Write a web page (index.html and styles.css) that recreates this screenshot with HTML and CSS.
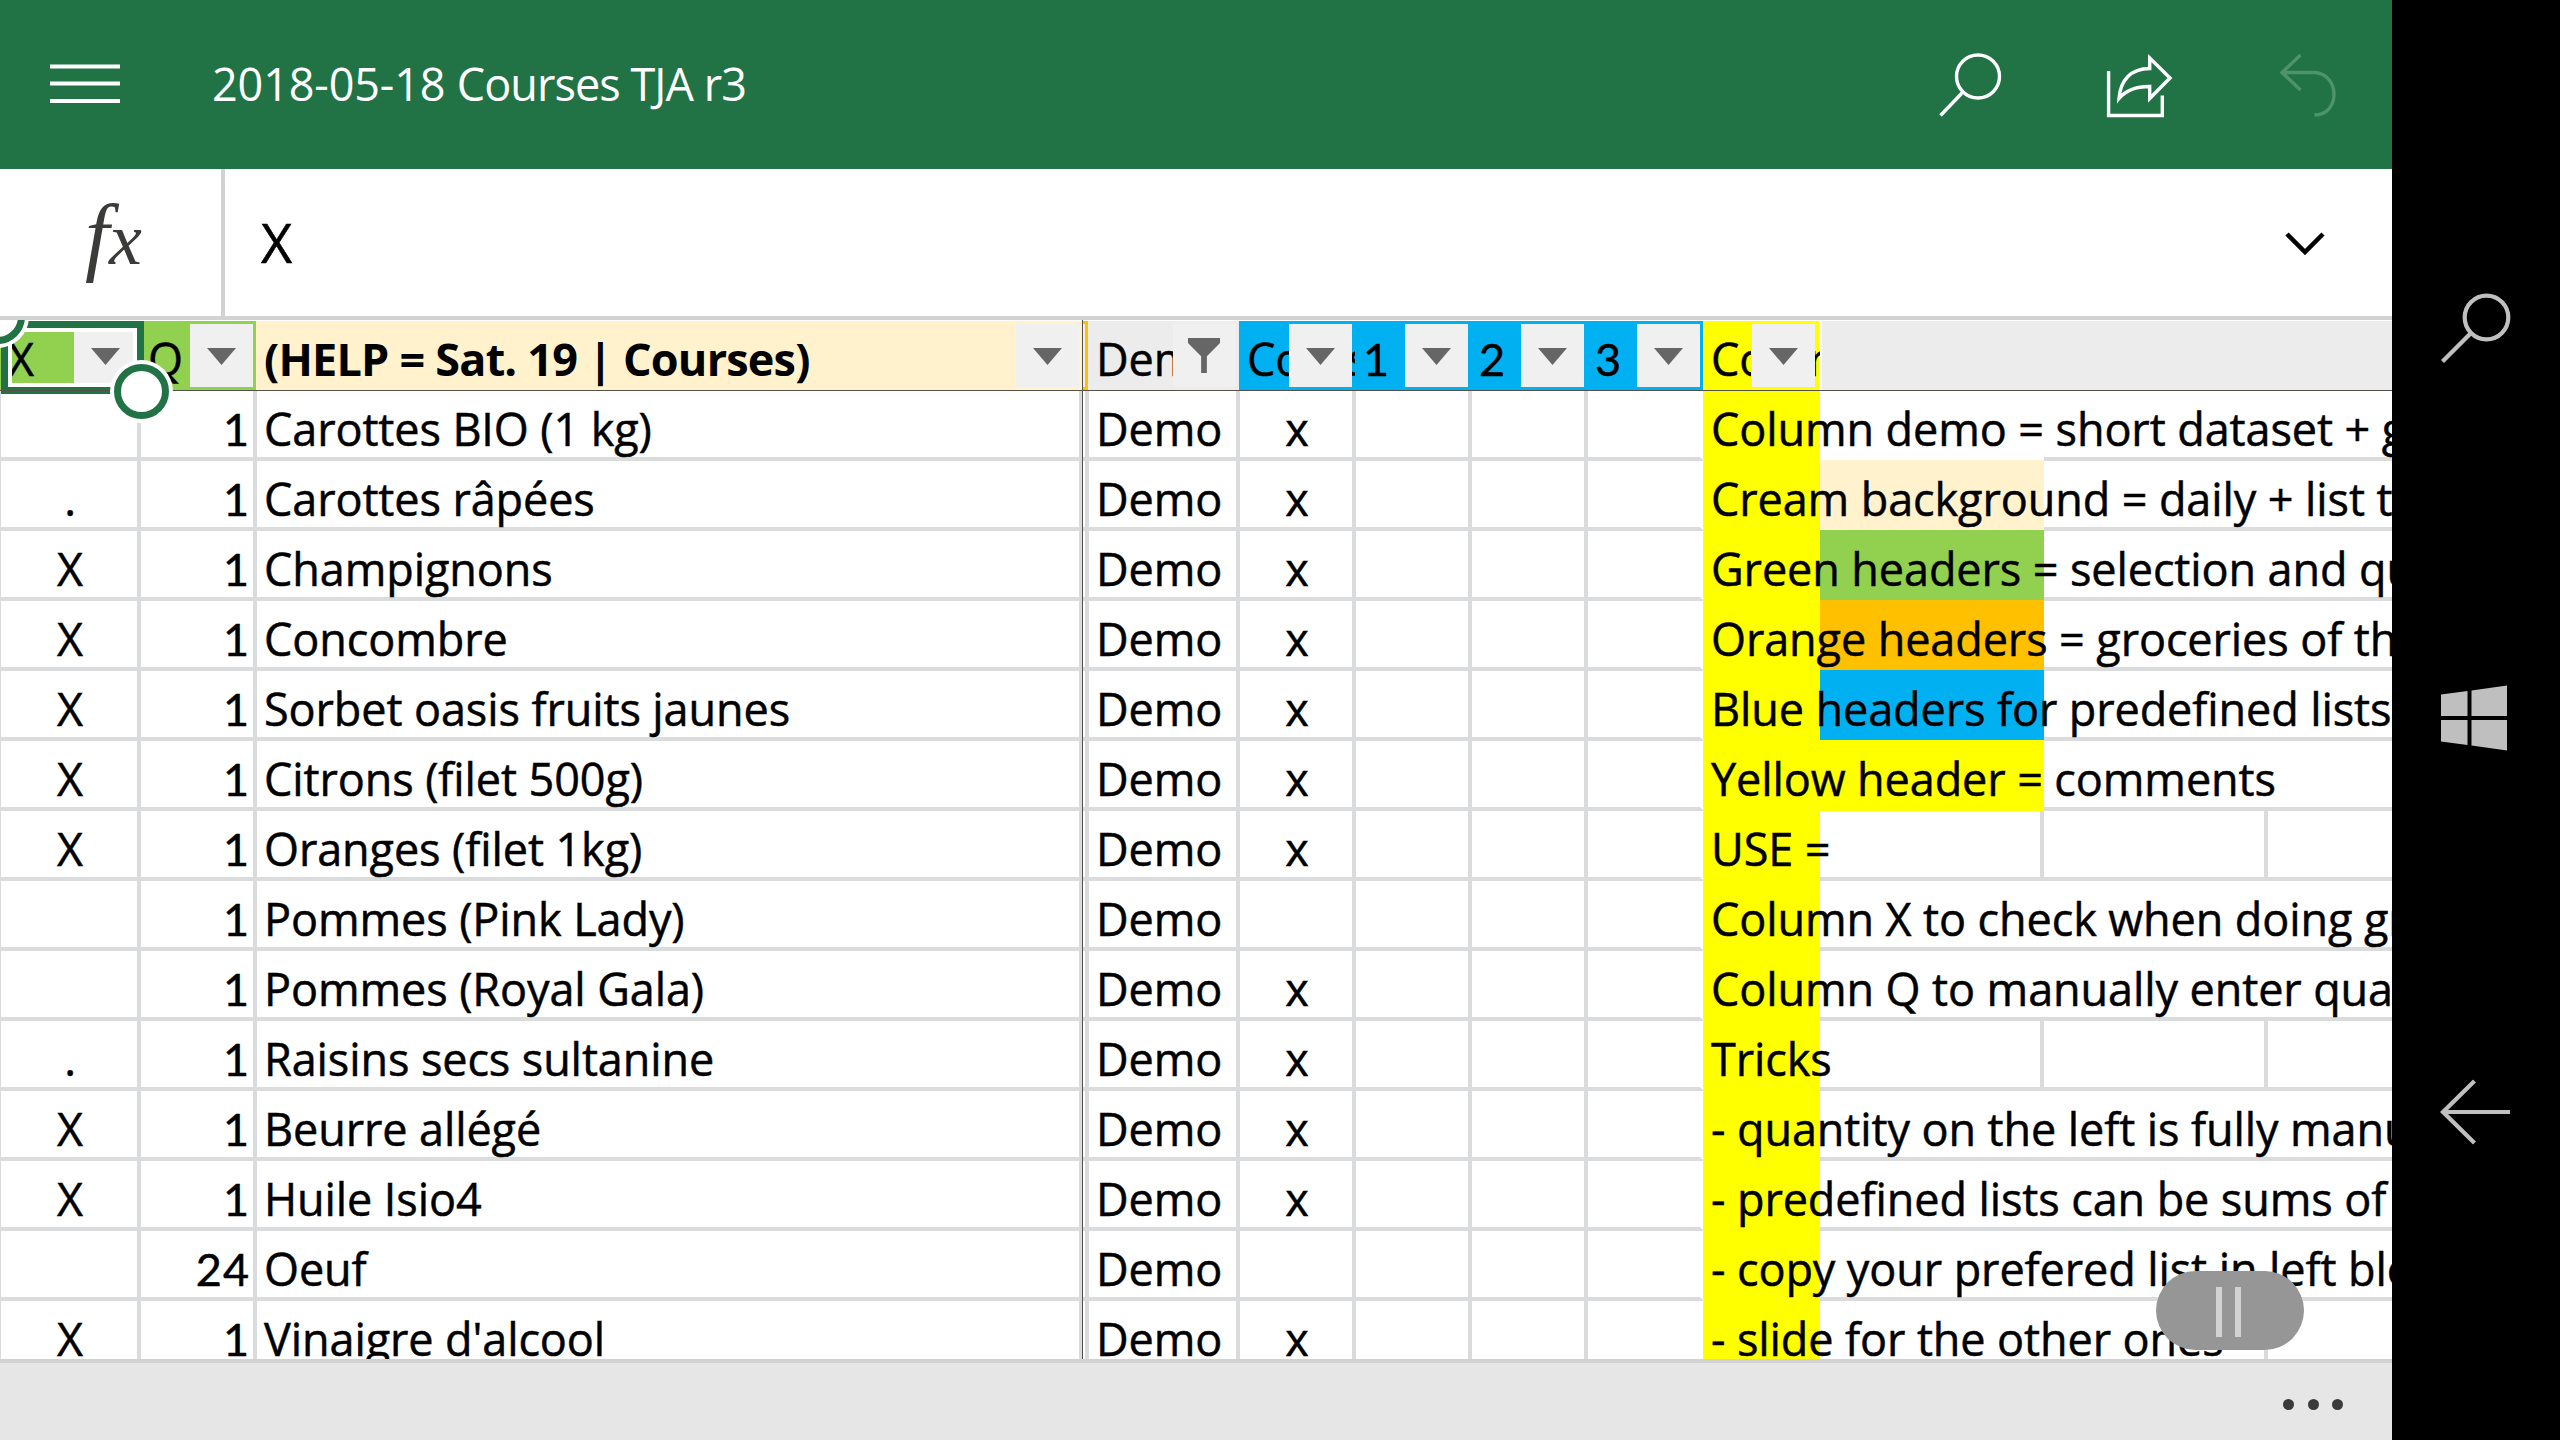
FILE: index.html
```html
<!DOCTYPE html>
<html lang="en">
<head>
<meta charset="utf-8">
<title>2018-05-18 Courses TJA r3</title>
<link rel="stylesheet" href="styles.css">
</head>
<body>
<div class="screen">
  <main class="app">
    <header class="titlebar">
      <svg class="menu" viewBox="0 0 70 40"><path d="M0 2.5h70M0 19.5h70M0 37h70"/></svg>
      <h1 class="title"><span class="date">2018-05-18 </span>Courses TJA r3</h1>
      <svg class="tools" viewBox="0 0 400 64">
        <circle cx="38" cy="23.500" r="21.5"/>
        <path d="M22.500 39.500 .5 62.500"/>
        <path d="M168.600 18V62.500H222.300V42.500M209.700 5 230 25 209.700 45.500V33.500C197 33.500 186 37 179 45.500C180.500 27 191 15.500 209.700 15.500Z"/>
        <path class="dim" d="M360.500 2 342 19.500 360.500 37M342 19.500H374.500C400.500 21 400.500 62 374.500 62"/>
      </svg>
    </header>
    <section class="formula">
      <div class="fx"><span class="f">f</span><span class="fx-x">x</span></div>
      <div class="value">X</div>
      <svg class="chevron" viewBox="0 0 40 24"><path d="M2 2 20 20 38 2"/></svg>
    </section>
    <section class="sheet">
      <div class="head">
        <div class="h green"><span>X</span><b class="btn btn-x"></b></div>
        <div class="h green"><span>Q</span><b class="btn"></b></div>
        <div class="h cream strong"><span>(HELP = Sat. 19 | Courses)</span><b class="btn"></b></div>
        <div class="h pane"></div>
        <div class="h grey"><span>Demo</span><b class="btn funnel"></b></div>
        <div class="h blue"><span>Cours</span><b class="btn"></b></div>
        <div class="h blue num"><span>1</span><b class="btn"></b></div>
        <div class="h blue num"><span>2</span><b class="btn"></b></div>
        <div class="h blue num"><span>3</span><b class="btn"></b></div>
        <div class="h yellow"><span class="com">Com</span><span class="tail">r</span><b class="btn"></b></div>
        <div class="h rest"></div>
      </div>
      <div class="row"><div></div><div class="n">1</div><div class="t">Carottes BIO (1 kg)</div><div class="gap"></div><div class="t">Demo</div><div class="c">x</div><div></div><div></div><div></div><div class="note"><span>Column demo = short dataset + groceries</span></div><div class="over bare"></div><div class="over"></div><div class="over"></div></div>
      <div class="row"><div class="c">.</div><div class="n">1</div><div class="t">Carottes râpées</div><div class="gap"></div><div class="t">Demo</div><div class="c">x</div><div></div><div></div><div></div><div class="note"><span>Cream background = daily + list to do</span></div><div class="fill cream"></div><div class="over"></div><div class="over"></div></div>
      <div class="row"><div class="c">X</div><div class="n">1</div><div class="t">Champignons</div><div class="gap"></div><div class="t">Demo</div><div class="c">x</div><div></div><div></div><div></div><div class="note"><span>Green headers = selection and quantity</span></div><div class="fill green"></div><div class="over"></div><div class="over"></div></div>
      <div class="row"><div class="c">X</div><div class="n">1</div><div class="t">Concombre</div><div class="gap"></div><div class="t">Demo</div><div class="c">x</div><div></div><div></div><div></div><div class="note"><span>Orange headers = groceries of the day</span></div><div class="fill orange"></div><div class="over"></div><div class="over"></div></div>
      <div class="row"><div class="c">X</div><div class="n">1</div><div class="t">Sorbet oasis fruits jaunes</div><div class="gap"></div><div class="t">Demo</div><div class="c">x</div><div></div><div></div><div></div><div class="note"><span>Blue headers for predefined lists</span></div><div class="fill blue"></div><div class="over"></div><div class="over"></div></div>
      <div class="row"><div class="c">X</div><div class="n">1</div><div class="t">Citrons (filet 500g)</div><div class="gap"></div><div class="t">Demo</div><div class="c">x</div><div></div><div></div><div></div><div class="note"><span>Yellow header = comments</span></div><div class="fill yellow last"></div><div class="over"></div><div class="over"></div></div>
      <div class="row"><div class="c">X</div><div class="n">1</div><div class="t">Oranges (filet 1kg)</div><div class="gap"></div><div class="t">Demo</div><div class="c">x</div><div></div><div></div><div></div><div class="note"><span>USE =</span></div><div></div><div></div><div class="over"></div></div>
      <div class="row"><div></div><div class="n">1</div><div class="t">Pommes (Pink Lady)</div><div class="gap"></div><div class="t">Demo</div><div></div><div></div><div></div><div></div><div class="note"><span>Column X to check when doing groceries</span></div><div class="over"></div><div class="over"></div><div class="over"></div></div>
      <div class="row"><div></div><div class="n">1</div><div class="t">Pommes (Royal Gala)</div><div class="gap"></div><div class="t">Demo</div><div class="c">x</div><div></div><div></div><div></div><div class="note"><span>Column Q to manually enter quantity</span></div><div class="over"></div><div class="over"></div><div class="over"></div></div>
      <div class="row"><div class="c">.</div><div class="n">1</div><div class="t">Raisins secs sultanine</div><div class="gap"></div><div class="t">Demo</div><div class="c">x</div><div></div><div></div><div></div><div class="note"><span>Tricks</span></div><div></div><div></div><div class="over"></div></div>
      <div class="row"><div class="c">X</div><div class="n">1</div><div class="t">Beurre allégé</div><div class="gap"></div><div class="t">Demo</div><div class="c">x</div><div></div><div></div><div></div><div class="note"><span>- quantity on the left is fully manual</span></div><div class="over"></div><div class="over"></div><div class="over"></div></div>
      <div class="row"><div class="c">X</div><div class="n">1</div><div class="t">Huile Isio4</div><div class="gap"></div><div class="t">Demo</div><div class="c">x</div><div></div><div></div><div></div><div class="note"><span>- predefined lists can be sums of</span></div><div class="over"></div><div class="over"></div><div class="over"></div></div>
      <div class="row"><div></div><div class="n">24</div><div class="t">Oeuf</div><div class="gap"></div><div class="t">Demo</div><div></div><div></div><div></div><div></div><div class="note"><span>- copy your prefered list in left block</span></div><div class="over"></div><div class="over"></div><div class="over"></div></div>
      <div class="row"><div class="c">X</div><div class="n">1</div><div class="t">Vinaigre d'alcool</div><div class="gap"></div><div class="t">Demo</div><div class="c">x</div><div></div><div></div><div></div><div class="note"><span>- slide for the other ones</span></div><div class="over"></div><div></div><div class="over"></div></div>
      <div class="selection"></div>
      <div class="freeze-h"></div>
      <div class="freeze-v"></div>
      <div class="handle start"></div>
      <div class="handle end"></div>
      <div class="scroller"><i></i><i></i></div>
    </section>
    <footer class="bottombar"><i></i><i></i><i></i></footer>
  </main>
  <nav class="navbar">
    <svg class="nav-search" viewBox="0 0 72 72"><circle cx="46.500" cy="25.500" r="21.800"/><path d="M30.500 41.500 2.500 69.500"/></svg>
    <svg class="nav-win" viewBox="0 0 66 66"><path d="M0 9.500 26.500 6V31H0ZM30.500 5.500 66 .5V31H30.500ZM0 35H26.500V60L0 56.500ZM30.500 35H66V65.500L30.500 60.500Z"/></svg>
    <svg class="nav-back" viewBox="0 0 70 66"><path d="M70 33H3M34.500 2 3 33 34.500 64"/></svg>
  </nav>
</div>
</body>
</html>
```
FILE: styles.css
```css
* { box-sizing: border-box; }
body { margin: 0; background: #000; overflow: hidden; }
.screen { display: flex; width: 2560px; height: 1440px; }
.app {
  display: flex; flex-direction: column;
  width: 2392px; height: 1440px; background: #fff; overflow: hidden;
  font-family: "Open Sans", "Noto Sans", sans-serif; color: #000;
}

/* title bar */
.titlebar { display: flex; align-items: center; height: 169px; flex: none; background: #217346; padding-left: 50px; }
.menu { width: 70px; height: 40px; margin-bottom: 2px; fill: none; stroke: #fff; stroke-width: 4; }
.title { margin: 0 0 2px 92px; flex: 1; font-size: 45px; line-height: 62px; font-weight: 400; letter-spacing: -0.95px; color: #fff; white-space: pre; }
.date { letter-spacing: -0.15px; }
.tools { width: 400px; height: 64px; margin-right: 52px; fill: none; stroke: #fff; stroke-width: 3.4; overflow: visible; }
.tools .dim { stroke: #4d9468; }

/* formula bar */
.formula { display: flex; align-items: center; height: 151px; flex: none; border-bottom: 4px solid #d2d2d2; }
.fx {
  width: 225px; height: 147px; border-right: 4px solid #d2d2d2; display: flex; align-items: baseline;
  padding-left: 90px; font-family: "Liberation Serif", serif; font-style: italic; color: #3b3b3a; line-height: 132px;
}
.fx { padding-left: 81px; }
.f { font-size: 87px; width: 27px; margin-left: 4px; margin-right: -3px; }
.fx-x { font-size: 74px; }
.value { flex: 1; padding-left: 36px; font-size: 54px; line-height: 147px; -webkit-text-stroke: 0.5px #000; }
.chevron { width: 40px; height: 24px; margin-right: 67px; margin-top: 3px; fill: none; stroke: #000; stroke-width: 4.500; }

/* sheet */
.sheet { position: relative; flex: none; height: 1039px; overflow: hidden; padding-top: 1px; font-size: 45px; line-height: 76px; letter-spacing: -0.1px; -webkit-text-stroke: 0.5px #000; background: #fff; }
.green { background: #92d050; }
.cream { background: #fff2cc; }
.blue { background: #00b0f0; }
.yellow { background: #ff0; }
.orange { background: #ffc000; }
.grey { background: #ececec; }

.head { display: grid; grid-template-columns: 140px 116px 827px 5px 151px 116px 116px 116px 116px 119px 1fr; height: 70px; }
.h { position: relative; height: 69px; display: flex; padding: 3px 3px 0 8px; overflow: hidden; white-space: nowrap; }
.h span { margin-top: -3px; width: 0; }
.strong { font-weight: 700; letter-spacing: -0.8px; padding-right: 4px; -webkit-text-stroke: 0; }
.head .num { font-family: Lato, sans-serif; }
.btn { position: relative; width: 63px; height: 63px; margin-left: auto; background: #f0f0f0; }
.btn::after {
  content: ""; position: absolute; left: 17px; top: 24px; width: 29px; height: 17px;
  background: #666; clip-path: polygon(0 0, 100% 0, 50% 100%);
}
.funnel::after { left: 15px; top: 14px; width: 32px; height: 35px; clip-path: polygon(0 0, 100% 0, 100% 14%, 59% 52%, 59% 100%, 41% 100%, 41% 52%, 0 14%); }
.btn-x { margin-right: 0; }
.h.pane { background: #f0f0f0; border: solid #ffc000; border-width: 3px 3px 3px 0; padding: 0; }
.h.yellow { background: linear-gradient(to right, #ff0 116px, #fff 116px); }
.h.yellow .btn { margin-right: 3px; }
.h.yellow { padding-right: 4px; }
.h.yellow .com { width: 40px; overflow: hidden; }
.h.yellow .tail { position: absolute; left: 105px; top: 3px; width: 12px; overflow: hidden; }
.h.rest { background: #ececec; }

.row { display: grid; grid-template-columns: 141px 116px 826px 6px 151px 116px 116px 116px 116px 116px 224px 224px 124px; height: 70px; }
.row > div { height: 70px; border: solid #dadbdc; border-width: 0 4px 4px 0; white-space: nowrap; }
.row > div:first-child { border-left: 1px solid #dadbdc; }
.row > .t { padding-left: 7px; }
.row > .n { padding-right: 3px; text-align: right; font-family: Lato, sans-serif; letter-spacing: 1px; }
.row > .c { text-align: center; padding-left: 2px; }
.row > div:nth-child(9) { border-right-color: #fff; }
.row > .note { position: relative; z-index: 2; left: -1px; width: 117px; border: 0; background: #ff0; padding-left: 8px; }
.row > .over { border-right: 0; }
.row > .bare { border-bottom-color: #fff; }
.row > .fill { position: relative; z-index: 1; top: -1px; left: -1px; width: 225px; border: 0; }
.row > .last { height: 71px; }

.selection { position: absolute; left: 1px; top: 1px; width: 143px; height: 73px; border: 7px solid #217346; box-shadow: inset 0 0 0 4px #fff; }
.freeze-h { position: absolute; left: 0; top: 70px; width: 2392px; height: 1px; background: #55514a; }
.freeze-v { position: absolute; left: 1082px; top: 0; width: 1px; height: 1039px; background: #55514a; }
.handle { position: absolute; width: 55px; height: 55px; border: 7px solid #217346; border-radius: 50%; background: #fff; box-shadow: 0 0 0 4px #fff; }
.start { left: -30px; top: -31px; }
.end { left: 114px; top: 44px; }
.scroller { position: absolute; z-index: 3; left: 2156px; top: 951px; width: 148px; height: 79px; border-radius: 40px; background: #969696; display: flex; gap: 13px; padding: 16px 0 0 60px; }
.scroller i { width: 6px; height: 50px; background: #d2d2d2; }

/* bottom bar */
.bottombar { flex: 1; border-top: 4px solid #d2d2d2; background: #e6e6e6; display: flex; justify-content: flex-end; gap: 13.500px; padding: 36px 49px 0 0; }
.bottombar i { width: 11px; height: 11px; border-radius: 50%; background: #3b3b3a; }

/* phone navigation keys */
.navbar { flex: 1; background: #000; display: flex; flex-direction: column; align-items: flex-start; padding: 292px 0 0 48px; fill: none; stroke: #bfbfbf; stroke-width: 4.200; }
.nav-search { width: 72px; height: 72px; }
.nav-win { width: 66px; height: 66px; margin: 321px 0 0 1px; fill: #bfbfbf; stroke: none; }
.nav-back { width: 70px; height: 66px; margin: 328px 0 0 0; }
```
